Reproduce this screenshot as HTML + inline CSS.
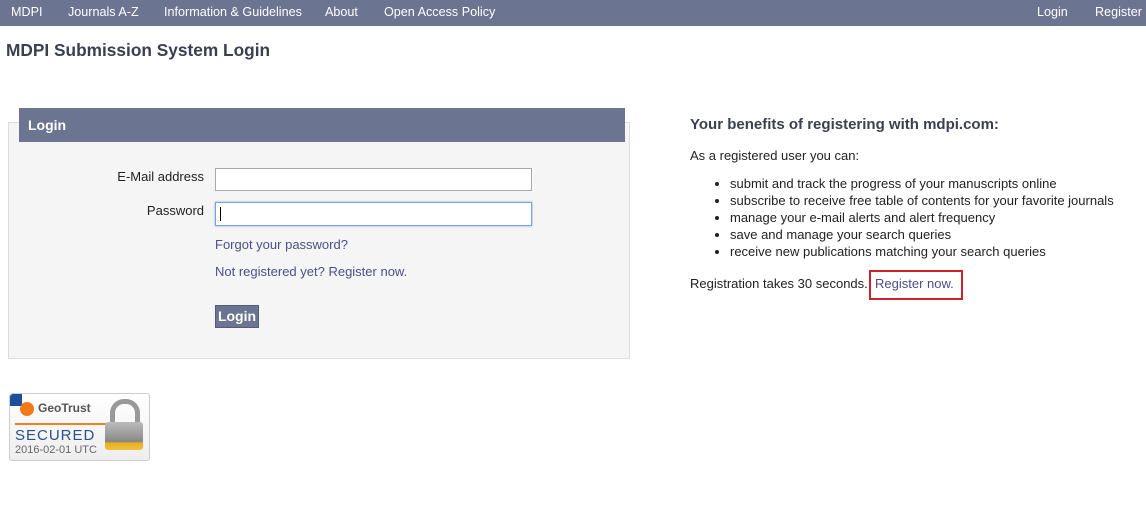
<!DOCTYPE html>
<html><head><style>
body{margin:0;width:1146px;height:515px;background:#fff;font-family:"Liberation Sans",Arial,sans-serif;font-size:13px;color:#222;position:relative;overflow:hidden}
.nav{position:absolute;left:0;top:0;width:1146px;height:26px;background:#6b7490;color:#fff}
.nav span{position:absolute;top:5px;font-size:12.6px}
.a{position:absolute}
a{color:#4a4f8a;text-decoration:none}
input{position:absolute;box-sizing:border-box;background:#fff;border:1px solid #aaa;margin:0;padding:0}
li{margin:0 0 1px 0;line-height:16px}
</style></head><body>
<div class="nav">
<span style="left:11px">MDPI</span><span style="left:68px">Journals A-Z</span><span style="left:164px">Information &amp; Guidelines</span><span style="left:325px">About</span><span style="left:384px">Open Access Policy</span><span style="left:1037px">Login</span><span style="left:1095px">Register</span>
</div>
<div class="a" style="left:6px;top:40px;font-size:17.3px;font-weight:bold;color:#3b3f50">MDPI Submission System Login</div>
<div class="a" style="left:8px;top:122px;width:620px;height:235px;background:#f5f5f5;border:1px solid #ddd"></div>
<div class="a" style="left:19px;top:108px;width:606px;height:34px;background:#6b7490;color:#fff;font-weight:bold;font-size:14px;line-height:34px;text-indent:9px">Login</div>
<div class="a" style="left:80px;top:169px;width:124px;text-align:right">E-Mail address</div>
<div class="a" style="left:80px;top:203px;width:124px;text-align:right">Password</div>
<input style="left:215px;top:168px;width:317px;height:23px">
<input style="left:215px;top:202px;width:317px;height:24px;border-color:#7aa2e0;box-shadow:0 0 2px #8ab">
<div class="a" style="left:220px;top:207px;width:1px;height:14px;background:#000"></div>
<div class="a" style="left:215px;top:237px"><a>Forgot your password?</a></div>
<div class="a" style="left:215px;top:264px"><a>Not registered yet? Register now.</a></div>
<div class="a" style="left:215px;top:305px;width:44px;height:23px;background:#6b7490;border:1px solid #555c78;box-sizing:border-box;color:#fff;font-weight:bold;font-size:14px;text-align:center;line-height:21px">Login</div>
<div class="a" style="left:690px;top:116px;font-size:15px;font-weight:bold;color:#3b3f50">Your benefits of registering with mdpi.com:</div>
<div class="a" style="left:690px;top:148px">As a registered user you can:</div>
<ul class="a" style="left:690px;top:176px;margin:0;padding-left:40px">
<li>submit and track the progress of your manuscripts online</li>
<li>subscribe to receive free table of contents for your favorite journals</li>
<li>manage your e-mail alerts and alert frequency</li>
<li>save and manage your search queries</li>
<li>receive new publications matching your search queries</li>
</ul>
<div class="a" style="left:690px;top:276px">Registration takes 30 seconds.</div>
<div class="a" style="left:869px;top:270px;width:90px;height:26px;border:2px solid #d0202a"></div>
<div class="a" style="left:875px;top:276px"><a>Register now.</a></div>
<div class="a" style="left:9px;top:393px;width:139px;height:66px;border:1px solid #ccc;border-radius:3px;background:linear-gradient(#fff,#eee)">
<div class="a" style="left:0;top:0;width:12px;height:12px;background:#1b4e9b;border-top-left-radius:3px"></div>
<div class="a" style="left:10px;top:8px;width:14px;height:14px;border-radius:50%;background:#f07a1a"></div>
<div class="a" style="left:28px;top:7px;font-size:12px;font-weight:bold;color:#555">GeoTrust</div>
<div class="a" style="left:5px;top:29px;width:100px;height:2px;background:#f08020"></div>
<div class="a" style="left:5px;top:33px;font-size:15px;color:#2a4f8a;letter-spacing:1px">SECURED</div>
<div class="a" style="left:5px;top:50px;font-size:11px;color:#666">2016-02-01 UTC</div>
<div class="a" style="left:100px;top:5px;width:20px;height:26px;border:5px solid #999;border-bottom:none;border-radius:14px 14px 0 0"></div>
<div class="a" style="left:95px;top:28px;width:38px;height:28px;background:linear-gradient(#bbb,#888 70%,#e8b020 75%,#f0c040);border-radius:3px"></div>
</div>
</body></html>
